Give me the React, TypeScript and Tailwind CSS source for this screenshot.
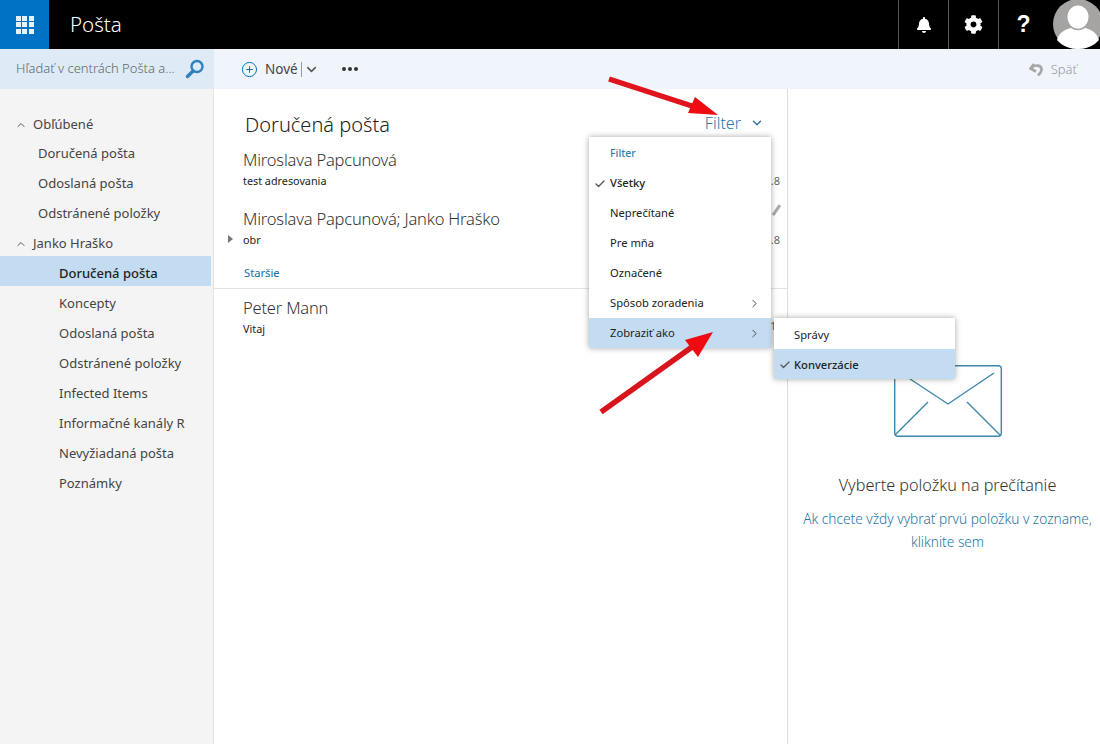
import React from "react";
import { FaBell, FaCog } from "react-icons/fa";
import { Check, ChevronDown, ChevronRight, ChevronUp, CirclePlus } from "lucide-react";

const font = "[font-family:'Noto_Sans',sans-serif]";

function NavHeader({ label, short }: { label: string; short?: boolean }) {
  return (
    <div className={`flex items-center pt-[6px] text-[13px] text-[#444] ${short ? "h-[28px]" : "h-[30px]"}`}>
      <ChevronUp size={12} strokeWidth={2} className="ml-[15px] mr-[6px] text-[#555]" />
      <span>{label}</span>
    </div>
  );
}

function NavItem({ label, indent, selected }: { label: string; indent: "fav" | "sub"; selected?: boolean }) {
  return (
    <div
      className={`flex h-[30px] w-[211px] items-center overflow-hidden whitespace-nowrap pt-[6px] text-[13px] ${
        indent === "fav" ? "pl-[38px]" : "pl-[59px]"
      } ${selected ? "bg-[#c4dcf1] font-medium text-[#222]" : "text-[#444]"}`}
    >
      <span className="block max-w-[126px] overflow-hidden">{label}</span>
    </div>
  );
}

function MailRow({ name, subject, expand, time, timeClass, mark }: { name: string; subject: string; expand?: boolean; time?: string; timeClass?: string; mark?: boolean }) {
  return (
    <div className="relative pl-[29px] pr-[7px]">
      <div className="text-[16.5px] font-light leading-[24px] tracking-[-0.2px] text-[#333]">{name}</div>
      <div className="flex h-[18px] items-center text-[10.8px] text-[#222]">{subject}</div>
      {expand && <div className="absolute left-[14px] top-[28px] h-0 w-0 border-y-[4px] border-l-[5px] border-y-transparent border-l-[#777]" />}
      {time && <div className={`absolute text-[11px] text-[#666] ${timeClass ?? "right-[7px] top-[25px]"}`}>{time}</div>}
      {mark && <div className="absolute right-[10px] top-[-3px] h-[12px] w-[2.5px] rotate-[35deg] bg-[#aaa]" />}
    </div>
  );
}

function MenuItem({ label, checked, selected, arrow, bold, tall, sub }: { label: string; checked?: boolean; selected?: boolean; arrow?: boolean; bold?: boolean; tall?: boolean; sub?: boolean }) {
  return (
    <div className={`relative flex items-center pr-[10px] text-[11.2px] text-[#222] ${sub ? "pl-[20px] pt-[3px]" : "pl-[21px] pt-[1px]"} ${tall ? "h-[31px]" : "h-[30px]"} ${selected ? "bg-[#c4dcf1]" : ""}`}>
      {checked && <Check size={12} strokeWidth={2.5} className="absolute left-[5px] top-[10px] text-[#555]" />}
      <span className={`flex-1 ${bold ? "font-medium" : ""}`}>{label}</span>
      {arrow && <ChevronRight size={13} strokeWidth={1.8} className="text-[#444]" />}
    </div>
  );
}

export default function App() {
  return (
    <div className={`relative flex h-[744px] w-[1100px] flex-col overflow-hidden bg-white ${font}`}>
      <header className="flex h-[49px] shrink-0 items-center bg-black text-white">
        <div className="flex h-full w-[49px] items-center justify-center bg-[#0072c6]">
          <div className="grid grid-cols-3 gap-[1.5px]">
            {Array.from({ length: 9 }).map((_, i) => (
              <div key={i} className="h-[5px] w-[5px] bg-[#e8f2fa]" />
            ))}
          </div>
        </div>
        <div className="ml-[21px] flex-1 pb-[1px] text-[20.5px] font-light">Pošta</div>
        <div className="flex h-full w-[50px] items-center justify-center border-l border-[#555]">
          <FaBell size={16} />
        </div>
        <div className="flex h-full w-[50px] items-center justify-center border-l border-[#555]">
          <FaCog size={19} />
        </div>
        <div className="flex h-full w-[55px] items-center justify-center border-l border-[#555] pr-[5px] font-['Liberation_Sans'] text-[23px] font-bold">?</div>
        <div className="h-[49px] w-[47px] shrink-0 overflow-hidden">
          <svg width="50" height="49" viewBox="0 0 50 49">
            <circle cx="25" cy="24" r="25" fill="#a5a4a3" />
            <ellipse cx="25" cy="17" rx="10.5" ry="11.5" fill="#fff" />
            <path d="M4 40c2-8 9-11 14-12 4 3 10 3 14 0 5 1 12 4 14 12-5 6-13 9-21 9S9 46 4 40z" fill="#fff" />
          </svg>
        </div>
      </header>

      <div className="flex h-[40px] shrink-0 bg-[#eff5fb]">
        <div className="flex w-[214px] items-center bg-[#deeaf6] pl-[16px] text-[13px] text-[#666]">
          <span className="w-[169px] whitespace-nowrap font-light">Hľadať v centrách Pošta a...</span>
          <svg width="20" height="20" viewBox="0 0 20 20" fill="none" stroke="#2f81bd" className="mt-[-1px]">
            <circle cx="12" cy="7.5" r="5.5" strokeWidth="2.4" />
            <path d="M8 12L2.5 17.5" strokeWidth="3.4" strokeLinecap="round" />
          </svg>
        </div>
        <div className="flex flex-1 items-center pl-[27px] text-[13.5px] text-[#444]">
          <CirclePlus size={17} strokeWidth={1.4} className="text-[#0072c6]" />
          <span className="ml-[7px] pt-[1px]">Nové</span>
          <span className="ml-[3px] h-[15px] w-px bg-[#999]" />
          <ChevronDown size={15} strokeWidth={2.4} className="ml-[2px] text-[#555]" />
          <span className="ml-[23px] flex gap-[2px]">
            <span className="h-[4px] w-[4px] rounded-full bg-[#333]" />
            <span className="h-[4px] w-[4px] rounded-full bg-[#333]" />
            <span className="h-[4px] w-[4px] rounded-full bg-[#333]" />
          </span>
          <div className="flex-1" />
          <svg width="14" height="13" viewBox="0 0 14 13" fill="none" stroke="#a6a6a6" strokeWidth="2.6" className="mr-[8px]">
            <path d="M5 1L1.5 5.5 7 8.5" />
            <path d="M2 5C6 1 13 2 12.5 7c-.2 2.5-2 4-3.5 5.5" />
          </svg>
          <span className="mr-[23px] pt-[1px] text-[13px] font-light text-[#999]">Späť</span>
        </div>
      </div>

      <div className="flex min-h-0 flex-1">
        <nav className="w-[214px] shrink-0 border-r border-[#e3e3e3] bg-[#f4f4f4] pt-[19px]">
          <NavHeader short label="Obľúbené" />
          <NavItem indent="fav" label="Doručená pošta" />
          <NavItem indent="fav" label="Odoslaná pošta" />
          <NavItem indent="fav" label="Odstránené položky" />
          <NavHeader label="Janko Hraško" />
          <NavItem indent="sub" selected label="Doručená pošta" />
          <NavItem indent="sub" label="Koncepty" />
          <NavItem indent="sub" label="Odoslaná pošta" />
          <NavItem indent="sub" label="Odstránené položky" />
          <NavItem indent="sub" label="Infected Items" />
          <NavItem indent="sub" label="Informačné kanály RSS" />
          <NavItem indent="sub" label="Nevyžiadaná pošta" />
          <NavItem indent="sub" label="Poznámky" />
        </nav>

        <main className="w-[574px] shrink-0 border-r border-[#dcdcdc]">
          <div className="flex h-[59px] items-end pb-[10px] pl-[31px] pr-[23px]">
            <div className="flex-1 text-[20px] font-light leading-[26px] text-[#222]">Doručená pošta</div>
            <div className="flex items-center pb-[3px] text-[16px] font-light leading-[24px] text-[#2d75ad]">
              Filter
              <ChevronDown size={14} strokeWidth={2.4} className="ml-[9px]" />
            </div>
          </div>
          <MailRow name="Miroslava Papcunová" subject="test adresovania" time=".8" />
          <div className="h-[17px]" />
          <MailRow name="Miroslava Papcunová; Janko Hraško" subject="obr" expand time=".8" mark />
          <div className="flex h-[39px] items-center pl-[30px] pt-[9px] text-[11.2px] text-[#0f6fa8]">Staršie</div>
          <div className="h-px bg-[#e3e3e3]" />
          <div className="h-[7px]" />
          <MailRow name="Peter Mann" subject="Vitaj" time="1" timeClass="left-[556px] top-[22px]" />
        </main>

        <section className="flex flex-1 flex-col items-center pl-[7px] pt-[276px]">
          <svg width="108" height="72" viewBox="0 0 108 72" fill="none" stroke="#3d87ab" strokeWidth="1.4">
            <rect x="0.7" y="0.7" width="106.6" height="70.6" rx="3" />
            <path d="M7 8l47 31 46-31" />
            <path d="M34 37L1 70M73 37l33 33" />
          </svg>
          <div className="mt-[35px] text-[16.2px] font-light leading-[26px] text-[#333]">Vyberte položku na prečítanie</div>
          <div className="mt-[9px] w-[300px] text-center text-[13.7px] font-light leading-[23px] text-[#1f74a0]">
            Ak chcete vždy vybrať prvú položku v zozname, kliknite sem
          </div>
        </section>
      </div>

      <div className="absolute left-[589px] top-[137px] w-[182px] bg-white shadow-[0_0_6px_rgba(0,0,0,0.35)]">
        <div className="flex h-[31px] items-center pl-[21px] pt-[2px] text-[10.5px] font-medium text-[#2d7fae]">Filter</div>
        <MenuItem label="Všetky" checked bold />
        <MenuItem label="Neprečítané" />
        <MenuItem label="Pre mňa" />
        <MenuItem label="Označené" />
        <MenuItem label="Spôsob zoradenia" arrow />
        <MenuItem label="Zobraziť ako" arrow selected />
      </div>

      <div className="absolute left-[774px] top-[318px] w-[181px] bg-white shadow-[0_0_6px_rgba(0,0,0,0.35)]">
        <MenuItem label="Správy" tall sub />
        <MenuItem label="Konverzácie" checked selected bold sub />
      </div>

      <svg className="pointer-events-none absolute left-0 top-0" width="1100" height="744" viewBox="0 0 1100 744">
        <path d="M609 79L695 107" stroke="#e0141c" strokeWidth="5.5" />
        <path d="M718 115L695 97L688 113Z" fill="#f00a12" />
        <path d="M601 412L692 347" stroke="#d8141c" strokeWidth="5.5" />
        <path d="M713 332L685 340L698 357Z" fill="#f00a12" />
      </svg>
    </div>
  );
}
